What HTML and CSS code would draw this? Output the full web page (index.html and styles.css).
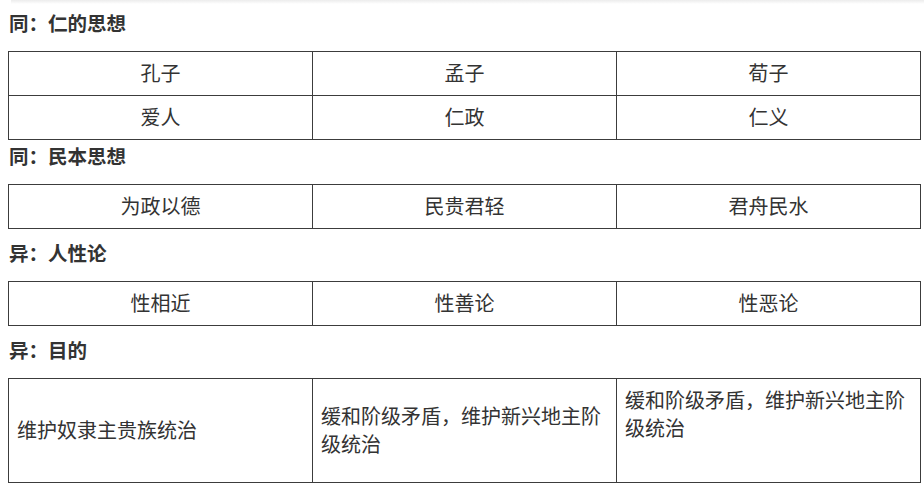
FILE: index.html
```html
<!DOCTYPE html>
<html lang="zh-CN">
<head>
<meta charset="utf-8">
<title>儒家思想比较</title>
<link rel="stylesheet" href="styles.css">
</head>
<body>
<div class="topshade"></div>
<main class="content">
  <h3 class="heading">同：仁的思想</h3>
  <table class="grid grid-first">
    <tr><td>孔子</td><td>孟子</td><td>荀子</td></tr>
    <tr><td>爱人</td><td>仁政</td><td>仁义</td></tr>
  </table>

  <h3 class="heading">同：民本思想</h3>
  <table class="grid">
    <tr><td>为政以德</td><td>民贵君轻</td><td>君舟民水</td></tr>
  </table>

  <h3 class="heading">异：人性论</h3>
  <table class="grid">
    <tr><td>性相近</td><td>性善论</td><td>性恶论</td></tr>
  </table>

  <h3 class="heading">异：目的</h3>
  <table class="grid grid-tall">
    <tr>
      <td class="left">维护奴隶主贵族统治</td>
      <td class="left">缓和阶级矛盾，维护新兴地主阶级统治</td>
      <td class="left top">缓和阶级矛盾，维护新兴地主阶级统治</td>
    </tr>
  </table>
</main>
</body>
</html>
```

FILE: styles.css
```css
html, body {
  margin: 0;
  padding: 0;
  background: #ffffff;
}

body {
  font-family: "Noto Sans CJK SC", "Noto Sans", sans-serif;
  color: #333333;
  position: relative;
  text-spacing-trim: space-all;
}

.topshade {
  position: absolute;
  left: 11px;
  right: 0;
  top: 0;
  height: 4px;
  background: linear-gradient(to bottom, #ececec, rgba(255,255,255,0));
}

.content {
  padding: 9px 3px 0 8px;
}

.heading {
  margin: 0 0 14px 1px;
  font-size: 19.5px;
  line-height: 28px;
  font-weight: bold;
  color: #333333;
}

.grid {
  width: 100%;
  border-collapse: collapse;
  table-layout: fixed;
  margin: 0 0 10px 0;
}

.grid-first {
  margin-bottom: 2px;
}

.grid td {
  border: 1px solid #3c3c3c;
  padding: 7px 8px 8px;
  height: 28px;
  font-size: 20px;
  line-height: 28px;
  text-align: center;
  vertical-align: middle;
  color: #333333;
}

.grid-tall td {
  height: 87px;
  padding-top: 7px;
  padding-bottom: 9px;
}

.grid td.left {
  text-align: left;
}

.grid td.top {
  vertical-align: top;
}
```
